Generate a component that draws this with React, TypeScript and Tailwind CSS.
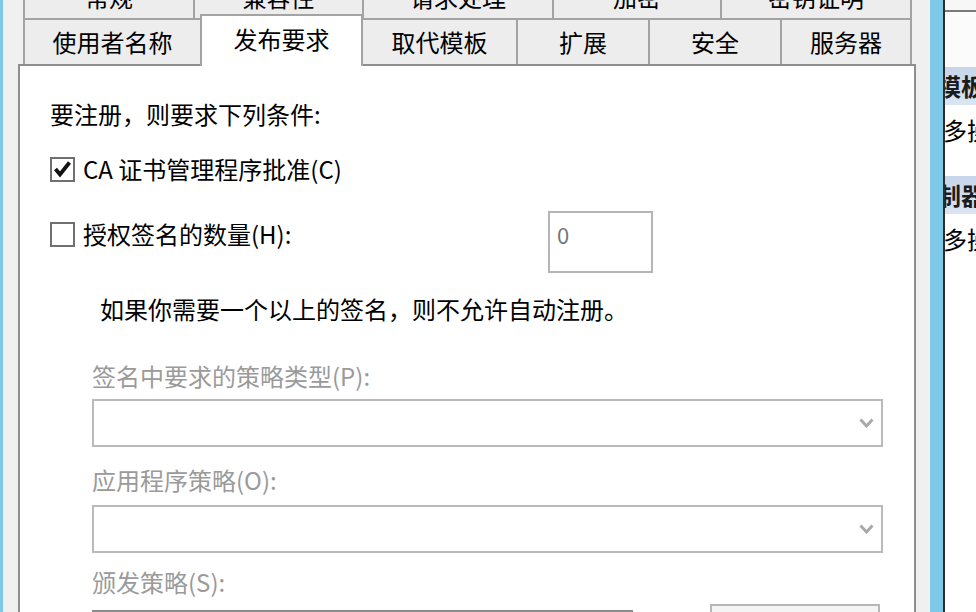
import React from 'react';

const topTabs = [
  { label: '常规', w: 'w-[170px]' },
  { label: '兼容性', w: 'w-[169px]' },
  { label: '请求处理', w: 'w-[190px]' },
  { label: '加密', w: 'w-[168px]' },
  { label: '密钥证明', w: 'w-[192px] border-r-2' },
];

function Checkbox({ checked }: { checked?: boolean }) {
  return (
    <div className="w-[25px] h-[25px] border-2 border-[#707070] bg-white shrink-0 flex items-center justify-center">
      {checked && (
        <svg width="21" height="21" viewBox="0 0 21 21">
          <path d="M3.5 10 L8 15.5 L17.5 3.5" fill="none" stroke="#111" strokeWidth="3.8" strokeLinejoin="miter" />
        </svg>
      )}
    </div>
  );
}

function Combo() {
  return (
    <div className="ml-[42px] w-[791px] h-[48px] border-2 border-[#bababa] bg-white flex items-center justify-end pr-[7px]">
      <svg width="15" height="10" viewBox="0 0 15 10">
        <path d="M1.5 1.5 L7.5 8 L13.5 1.5" fill="none" stroke="#a9a9a9" strokeWidth="3" />
      </svg>
    </div>
  );
}

export default function App() {
  return (
    <div className="w-[976px] h-[612px] overflow-hidden flex bg-[#f0f0f0] text-black text-[24px] font-['Noto_Sans_CJK_SC','Noto_Sans',sans-serif]">
      <div className="w-[3px] h-full shrink-0 bg-[#80c8e8]" />

      {/* dialog */}
      <div className="w-[927px] h-full shrink-0 flex flex-col pl-[15px] pr-[14px]">
        {/* tab strip, top row cut off */}
        <div className="-mt-[26px] pl-[5px]">
          <div className="flex h-[44px]">
            {topTabs.map((t) => (
              <div
                key={t.label}
                className={`${t.w} h-full border-l-2 border-t-2 border-[#a3a3a3] bg-[#ededed] flex items-center justify-center leading-[40px]`}
              >
                {t.label}
              </div>
            ))}
          </div>
          <div className="flex h-[46px] items-start">
            <div className="w-[177px] h-full border-l-2 border-t-2 border-[#a3a3a3] bg-[#ededed] flex items-center justify-center">
              使用者名称
            </div>
            <div className="relative z-10 w-[163px] h-[52px] -mt-[4px] border-x-2 border-t-2 border-[#a3a3a3] bg-white text-center leading-[46px]">
              发布要求
            </div>
            <div className="w-[153px] h-full border-t-2 border-[#a3a3a3] bg-[#ededed] flex items-center justify-center">
              取代模板
            </div>
            <div className="w-[132px] h-full border-l-2 border-t-2 border-[#a3a3a3] bg-[#ededed] flex items-center justify-center">
              扩展
            </div>
            <div className="w-[132px] h-full border-l-2 border-t-2 border-[#a3a3a3] bg-[#ededed] flex items-center justify-center">
              安全
            </div>
            <div className="w-[132px] h-full border-x-2 border-t-2 border-[#a3a3a3] bg-[#ededed] flex items-center justify-center">
              服务器
            </div>
          </div>
        </div>

        {/* tab panel */}
        <div className="flex-1 border-2 border-[#8e8e8e] bg-white pl-[30px] pt-[32px]">
          <div className="h-[32px] leading-[32px]">要注册，则要求下列条件:</div>

          <div className="mt-[23px] h-[32px] flex items-center gap-[8px]">
            <Checkbox checked />
            <span className="leading-[32px]">CA 证书管理程序批准(C)</span>
          </div>

          <div className="mt-[26px] flex items-start">
            <div className="w-[498px] h-[46px] flex items-center gap-[8px]">
              <Checkbox />
              <span className="leading-[32px]">授权签名的数量(H):</span>
            </div>
            <div className="w-[105px] h-[62px] border-2 border-[#b5b5b5] pl-[7px] leading-[42px] text-[22px] text-[#767676]">
              0
            </div>
          </div>

          <div className="mt-[20px] pl-[50px] h-[32px] leading-[32px]">
            如果你需要一个以上的签名，则不允许自动注册。
          </div>

          <div className="mt-[35px] pl-[42px] h-[32px] leading-[32px] text-[#9a9a9a]">签名中要求的策略类型(P):</div>
          <div className="mt-[7px]">
            <Combo />
          </div>

          <div className="mt-[17px] pl-[42px] h-[32px] leading-[32px] text-[#9a9a9a]">应用程序策略(O):</div>
          <div className="mt-[9px]">
            <Combo />
          </div>

          <div className="mt-[13px] pl-[42px] h-[32px] leading-[32px] text-[#9a9a9a]">颁发策略(S):</div>

          <div className="mt-[6px] flex items-start">
            <div className="ml-[42px] mt-[6px] w-[541px] h-[60px] border-2 border-[#8c8c8c] bg-white" />
            <div className="ml-[77px] w-[170px] h-[46px] border-2 border-[#b7b7b7] bg-[#f4f4f4]" />
          </div>
        </div>
      </div>

      {/* neighbouring window frame */}
      <div className="w-[13px] h-full shrink-0 bg-[#80c8e8]" />
      <div className="w-[2px] h-full shrink-0 bg-[#2d2d2d]" />

      {/* actions pane, cut off */}
      <div className="w-[31px] h-full shrink-0 bg-white overflow-hidden flex flex-col">
        <div className="h-[10px] bg-[#f7f7f7]" />
        <div className="h-[2px] bg-[#7a7a7a]" />
        <div className="h-[55px] bg-[#fbfbfb]" />
        <div className="h-[38px] bg-gradient-to-b from-[#c6d5ea] to-[#dbe5f2] whitespace-nowrap">
          <div className="-ml-[56px] leading-[38px] font-bold text-[#1b1b1b]">证书模板</div>
        </div>
        <div className="h-[50px] whitespace-nowrap -ml-[26px] leading-[50px]">更多操作</div>
        <div className="h-[21px]" />
        <div className="h-[38px] bg-gradient-to-b from-[#c6d5ea] to-[#dbe5f2] whitespace-nowrap">
          <div className="-ml-[56px] leading-[38px] font-bold text-[#1b1b1b]">域控制器</div>
        </div>
        <div className="h-[50px] whitespace-nowrap -ml-[26px] leading-[50px]">更多操作</div>
        <div className="flex-1 bg-white" />
      </div>
    </div>
  );
}
